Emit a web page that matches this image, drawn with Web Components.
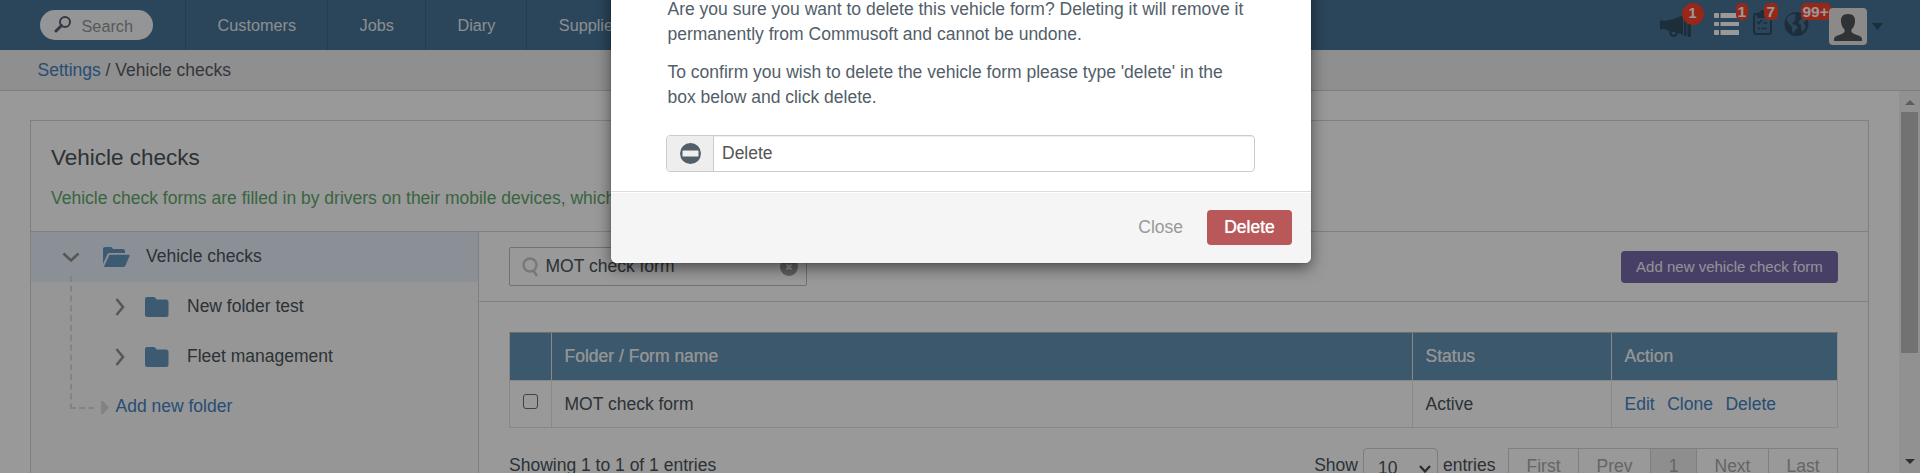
<!DOCTYPE html>
<html lang="en"><head><meta charset="utf-8"><title>Vehicle checks</title>
<style>
html,body{margin:0;height:100%;overflow:hidden;background:#fff}
body{font:17.5px/25px "Liberation Sans",Arial,sans-serif;color:#4a545b}
</style></head><body>
<app-shell></app-shell>
<script>
const define=(name,html)=>{
  const t=document.createElement('template');
  t.innerHTML='<style>*{box-sizing:border-box}a{color:#4182c2;text-decoration:none}svg{display:block;flex:none}</style>'+html;
  customElements.define(name,class extends HTMLElement{
    constructor(){super();this.attachShadow({mode:'open'}).append(t.content.cloneNode(true));}
  });
};

define('nav-item',`<style>:host{display:flex;align-items:center;height:50px;padding:1px 31px 0 31.5px;border-left:1px solid #3c6482;color:#e6edf2;font-size:16.25px;white-space:nowrap}</style><slot></slot>`);

define('count-badge',`<style>:host{position:absolute;top:3px;height:17px;padding:0 2px;border-radius:5px;background:#fb412b;color:#fff;font:bold 15.5px/17px "Liberation Sans",Arial,sans-serif;white-space:nowrap}
:host([round]){width:22px;height:22px;line-height:21px;font-size:14.5px;border-radius:50%;padding:0;text-align:center}</style><slot></slot>`);

define('nav-icons',`<style>:host{display:flex;height:50px;align-items:flex-start;color:#304d62}
span{position:relative;display:block;height:50px}
.a{width:54px;padding-top:15px}.b{width:39px;padding-top:13px}.c{width:31px;padding-top:10px}.d{width:45px;padding-top:12px}
.a count-badge{left:22px}.b count-badge{left:22px}.c count-badge{left:11px;padding:0 3px}.d count-badge{left:17px;padding:0 2px}
.e{width:38px;height:37px;margin-top:8px;border-radius:4px;background:#eae6e4;overflow:hidden}
.f{margin:23px 0 0 5.5px}
</style>
<span class="a"><svg width="32" height="22" viewBox="0 0 32 22" fill="currentColor"><path d="M0 5.500Q1.500 4.500 3 6Q14 5 23 0V20Q20 18.500 18 18Q17.500 22 13 22Q9 21.500 9 16L3 13.500Q1.500 15 0 14Z"/><path d="M11.500 16.500L16 17.500Q15.500 19.700 13.500 19.700Q11.500 19.500 11.500 16.500Z" fill="#487396"/><rect x="24" y="0" width="2.500" height="21"/><rect x="27.500" y="0" width="3.500" height="22" rx="1"/></svg><count-badge round>1</count-badge></span>
<span class="b"><svg width="25" height="22" fill="#fff"><rect width="5" height="5" rx="1"/><rect x="6.500" width="18.500" height="5" rx=".5"/><rect y="9" width="5" height="4" rx="1"/><rect x="6.500" y="9" width="18.500" height="4" rx=".5"/><rect y="17" width="5" height="5" rx="1"/><rect x="6.500" y="17" width="18.500" height="5" rx=".5"/></svg><count-badge>1</count-badge></span>
<span class="c"><svg width="19" height="25" fill="none" stroke="currentColor" stroke-width="2"><rect x="1" y="4" width="17" height="20" rx="2.500"/><path d="M5 7V4Q6 3 7.500 3Q8 1 9.500 1T11.500 3Q13 3 14 4V7Z" fill="currentColor"/><path d="M4 11.500L6 13.500L9 10M10.500 13H14M5 18.500H7M8.500 18.500H14" stroke-width="1.500"/></svg><count-badge>7</count-badge></span>
<span class="d"><svg width="25" height="24"><circle cx="12.500" cy="12" r="12" fill="#304d62"/><path d="M4 4.500Q7 2 11 1.700L12 4L10.500 6L12 7L9.500 10L8 12L12 13L14 16L11 18.500L10 22L8 19L8 15L5 12L2.500 8Z" fill="#487396"/><path d="M16 3Q21 5 22 10L20.500 9L19.500 11L22 14Q21 18 18 20L17 16L17 13L14.500 11L15.500 8L18 7Z" fill="#487396"/></svg><count-badge>99+</count-badge></span>
<span class="e"><svg width="38" height="37" viewBox="0 0 38 37" fill="#50565b"><path d="M19 6C24.500 6 26.500 9.500 26 14C25.500 18 24 20 22.500 21.500V24Q24 26 28 27Q33 28.500 33 31V33H5V31Q5 28.500 10 27Q14 26 15.500 24V21.500C14 20 12.500 18 12 14C11.500 9.500 13.500 6 19 6Z"/></svg></span>
<svg class="f" width="11" height="7"><path d="M0 0H11L5.500 7Z" fill="#304d62"/></svg>`);

define('top-nav',`<style>:host{display:flex;height:50px;background:#487396}
.s{display:flex;align-items:center;width:113px;height:30px;margin:10px 32px 0 40px;border-radius:15px;background:#f7f9fc;color:#949494;font-size:16.25px;padding:2px 0 0 14px;gap:9.5px}
nav-icons{margin-left:auto;margin-right:37px}.s svg{margin-top:-5px}</style>
<div class="s"><svg width="18" height="18" fill="none" stroke="#57616f"><circle cx="11" cy="7" r="5" stroke-width="2"/><path d="M7.500 10.500L2 16" stroke-width="3" stroke-linecap="round"/></svg><span>Search</span></div>
<nav-item>Customers</nav-item><nav-item>Jobs</nav-item><nav-item>Diary</nav-item><nav-item>Suppliers</nav-item><nav-icons></nav-icons>`);

define('bread-crumb',`<style>:host{display:block;height:41px;padding:8px 37.500px 0;box-sizing:border-box;background:#eee;border-bottom:1px solid #d2d2d2;color:#5b5b66}</style><a>Settings</a> / Vehicle checks`);

define('panel-head',`<style>:host{display:block;box-sizing:border-box;height:111px;padding:23px 20px 0;border-bottom:1px solid #d6d6d6}
h1{font:22.5px/28px "Liberation Sans",Arial,sans-serif;margin:0 0 14px}p{margin:0;color:#60a86d;white-space:nowrap}</style>
<h1>Vehicle checks</h1><p>Vehicle check forms are filled in by drivers on their mobile devices, which</p>`);

define('tree-row',`<style>:host{display:flex;box-sizing:border-box;align-items:center;height:50px;padding:0 0 2px 83px}
:host([open]){background:#e6f0f8;padding-left:31px}
.o{display:none}:host([open]) .o{display:block}:host([open]) .c{display:none}
.fo{margin:2px 16px 0 23px}.fc{margin:2px 18px 0 19px}.ch{margin-top:2px}</style>
<svg class="o ch" width="18" height="10"><path d="M1.500 1.500L9 8.500L16.500 1.500" fill="none" stroke="#909090" stroke-width="2.500"/></svg>
<svg class="o fo" width="27" height="20" fill="#6498bf"><path d="M0 17V2Q0 0 2 0H8Q9 0 10 2H20Q22 2 22 4V6H7Q5 6 4.500 7Z"/><path d="M6.500 7.700H25.500Q27 7.700 26.500 9L22.500 18.500Q22 20 20 20H1.500Q.8 20 1.200 19Z"/></svg>
<svg class="c ch" width="12" height="18"><path d="M2.500 1L9 9L2.500 17" fill="none" stroke="#909090" stroke-width="2.500"/></svg>
<svg class="c fc" width="24" height="20" fill="#6498bf"><path d="M0 2Q0 0 2 0H9Q10.500 0 11.500 2.500H21Q23.500 2.500 23.500 5V17.500Q23.500 20 21 20H2.500Q0 20 0 17.500Z"/></svg>
<span><slot></slot></span>`);

define('folder-tree',`<style>:host{display:block;position:relative;box-sizing:border-box;width:448px;height:100%;background:#fafafa;border-right:1px solid #d3d6d8}
.l{position:absolute;left:39px;top:44px}.n{display:flex;align-items:center;height:50px;padding:0 0 2px 70px;gap:6.500px}.n svg{margin-top:3px}</style>
<tree-row open>Vehicle checks</tree-row><tree-row>New folder test</tree-row><tree-row>Fleet management</tree-row>
<div class="n"><svg width="8" height="13"><path d="M0 0H2L8 6.500L2 13H0Z" fill="#dadada"/></svg><a>Add new folder</a></div>
<svg class="l" width="26" height="134" fill="none" stroke="#dadada" stroke-width="2"><path d="M1 0V132" stroke-dasharray="6 3.800"/><path d="M0 132H24" stroke-dasharray="6 3.200"/></svg>`);

define('search-bar',`<style>:host{display:flex;box-sizing:border-box;justify-content:space-between;height:70px;padding:15px 30px 0;border-bottom:1px solid #d8d8d8}
.i{display:flex;align-items:center;width:298px;height:39px;border:1px solid #bcbcbc;border-radius:2px;padding:0 8px 0 12px}
.i span{flex:1;margin:0 0 0 6.500px}
.b{width:217px;height:32px;margin-top:4px;border-radius:4px;background:#7869aa;color:#f4f2fa;font-size:15px;line-height:31px;text-align:center}</style>
<div class="i"><svg width="17" height="20" fill="none" stroke="#c8c8c8"><circle cx="8" cy="8" r="6.500" stroke-width="2.300"/><path d="M11 13L15 19" stroke-width="2.500"/></svg><span>MOT check form</span><svg width="18" height="18"><circle cx="9" cy="9" r="9" fill="#a0a0a0"/><path d="M6.500 6.500L11.500 11.500M11.500 6.500L6.500 11.500" stroke="#eee" stroke-width="2"/></svg></div>
<div class="b">Add new vehicle check form</div>`);

define('forms-table',`<style>:host{display:grid;box-sizing:border-box;grid-template-columns:42px 861px 199px 226px;margin:30px 30px 0;width:1329px;border-left:1px solid #e2e2e2;border-top:1px solid #b8b8b8}
div{height:47px;border-right:1px solid #e4e4e4;border-bottom:1px solid #e4e4e4;padding:11px 0 0 12.500px;white-space:nowrap}
.h{height:48px;background:#6493b4;color:#f2f5f8;padding-top:11px;text-shadow:0 0 .5px #f2f5f8}a{margin-right:12.5px}
i{display:block;width:15px;height:15px;margin:2px 0 0 .5px;border:1.500px solid #6d6d6d;border-radius:3px}</style>
<div class="h"></div><div class="h">Folder / Form name</div><div class="h">Status</div><div class="h">Action</div>
<div><i></i></div><div>MOT check form</div><div>Active</div><div><a>Edit</a><a>Clone</a><a>Delete</a></div>`);

define('table-footer',`<style>:host{display:flex;margin:20px 30px 0;white-space:nowrap;height:39px}
.t{margin:5px auto 0 0}.w{margin-top:5px}
.s{display:flex;align-items:center;width:75px;height:40px;margin:0 5px 0 5px;padding:0 6px 0 14px;border:1px solid #d0d0d0;border-radius:4px;justify-content:space-between}.s svg{margin-top:2px}
.p{display:flex;margin-left:12.5px;height:39px;border:1px solid #d4d4d4;color:#a9a9a9}.p span{text-align:center;padding-top:5px;border-right:1px solid #d4d4d4}.p span:last-child{border:0}</style>
<span class="t">Showing 1 to 1 of 1 entries</span><span class="w">Show</span>
<span class="s"><span>10</span><svg width="12" height="8"><path d="M1 1L6 6.500L11 1" fill="none" stroke="#4a4a4a" stroke-width="2.300"/></svg></span><span class="w">entries</span>
<div class="p"><span style="width:70px">First</span><span style="width:72px">Prev</span><span style="width:46px;background:#ededed">1</span><span style="width:72px">Next</span><span style="width:68px">Last</span></div>`);

define('scroll-bar',`<style>:host{display:flex;flex-direction:column;align-items:center;width:21px;height:382px;background:#f2f2f2}
.u{margin-top:9px}.t{width:17px;height:241px;margin:7px 0 auto;background:#bfbfbf}.d{margin-bottom:9px}</style>
<svg class="u" width="10" height="5"><path d="M5 0L10 5H0Z" fill="#9c9c9c"/></svg><div class="t"></div><svg class="d" width="10" height="5"><path d="M0 0H10L5 5Z" fill="#505050"/></svg>`);

define('confirm-dialog',`<style>:host{position:absolute;left:611px;top:-70px;width:700px;height:333px;background:#fff;border-radius:6px;box-shadow:0 5px 15px rgba(0,0,0,.5),0 0 1px rgba(0,0,0,.5);display:flex;flex-direction:column;overflow:hidden;color:#525e69}
.body{flex:1;padding:67px 56px 0 55px}p{margin:0 0 13px;padding-left:1.5px;white-space:nowrap}
.g{display:flex;width:589px;height:37px;border:1px solid #ccc;border-radius:4px;margin-top:25px;overflow:hidden;color:#555}
.a{display:flex;align-items:center;justify-content:center;width:47px;background:#eee;border-right:1px solid #ccc}
.v{flex:1;padding:5px 8px;box-shadow:inset 0 1px 1px rgba(0,0,0,.075)}
.f{height:72px;border-top:1px solid #ddd;background:#f5f5f5;box-shadow:inset 0 1px 0 #fff;display:flex;justify-content:flex-end;align-items:flex-start;padding:18px 19px 0}
.f span{color:#999;margin:5px 24px 0 0}.f b{display:block;width:85px;height:35px;border-radius:4px;background:#b95858;color:#fff;text-align:center;font-weight:400;line-height:34px;text-shadow:0 0 .7px #fff}</style>
<div class="body"><p>Are you sure you want to delete this vehicle form? Deleting it will remove it<br>permanently from Commusoft and cannot be undone.</p><p>To confirm you wish to delete the vehicle form please type 'delete' in the<br>box below and click delete.</p>
<div class="g"><div class="a"><svg width="21" height="21"><circle cx="10.500" cy="10.500" r="10.500" fill="#525e69"/><rect x="2.500" y="7.500" width="16" height="6" rx=".5" fill="#eee"/></svg></div><div class="v">Delete</div></div></div>
<div class="f"><span>Close</span><b>Delete</b></div>`);

define('app-shell',`<style>:host{display:block;position:relative;height:473px;overflow:hidden}
.row{display:flex;height:382px}.page{flex:1;padding:29px 30px 0}
.panel{width:1839px;height:400px;border:1px solid #d6d6d6;border-bottom:0}
.cols{display:flex;height:300px}main{flex:1}
.veil{position:absolute;inset:0;background:rgba(0,0,0,.4)}</style>
<top-nav></top-nav><bread-crumb></bread-crumb>
<div class="row"><div class="page"><div class="panel"><panel-head></panel-head><div class="cols"><folder-tree></folder-tree><main><search-bar></search-bar><forms-table></forms-table><table-footer></table-footer></main></div></div></div><scroll-bar></scroll-bar></div>
<div class="veil"></div><confirm-dialog></confirm-dialog>`);
</script></body></html>
